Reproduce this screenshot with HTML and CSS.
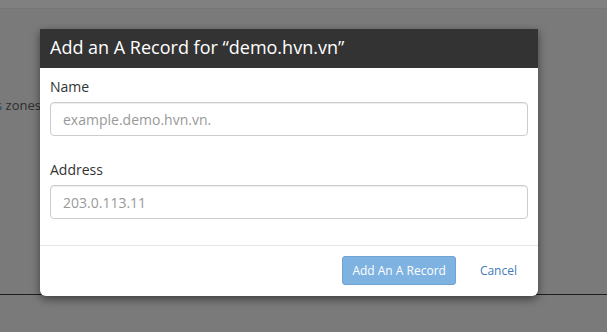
FILE: index.html
```html
<!DOCTYPE html>
<html lang="en">

<head>
    <meta charset="UTF-8">
    <meta name="viewport" content="width=device-width, initial-scale=1.0">
    <link rel="stylesheet" href="styles.css">
</head>

<body>
    <div class="page">
        <div class="topbar"></div>
        <p class="zones"><span class="link">s</span> zones</p>
        <div class="rule"></div>
    </div>

    <div class="overlay">
        <div class="modal">
            <header class="modal-header">Add an A Record for &ldquo;demo.hvn.vn&rdquo;</header>
            <div class="modal-body">
                <label class="field-label" for="name">Name</label>
                <input class="field-input" id="name" type="text" placeholder="example.demo.hvn.vn." />
                <label class="field-label second" for="address">Address</label>
                <input class="field-input" id="address" type="text" placeholder="203.0.113.11" />
            </div>
            <div class="modal-footer">
                <button class="add-btn" disabled>Add An A Record</button>
                <a class="cancel" href="#">Cancel</a>
            </div>
        </div>
    </div>
</body>

</html>
```

FILE: styles.css
```css
body {
    margin: 0;
    font-family: "Open Sans", "Liberation Sans", sans-serif;
    background-color: #7a7a7a;
    width: 607px;
    height: 332px;
    overflow: hidden;
}

.page {
    height: 332px;
}

.topbar {
    height: 8px;
    background-color: #808080;
    border-bottom: 1px solid #767676;
}

.zones {
    margin: 0;
    padding-top: 87px;
    margin-left: -4px;
    font-size: 13px;
    color: #2e2e2e;
}

.zones .link {
    color: #2a4a66;
}

.rule {
    margin-top: 180px;
    height: 1px;
    background-color: #1e1e1e;
}

.overlay {
    position: absolute;
    top: 0;
    left: 0;
    width: 607px;
    height: 332px;
}

.modal {
    margin-top: 29px;
    margin-left: 40px;
    width: 498px;
    background-color: #fff;
    border-radius: 0 0 6px 6px;
    box-shadow: 0 3px 9px rgba(0, 0, 0, 0.5);
}

.modal-header {
    height: 39px;
    box-sizing: border-box;
    padding: 6px 10px 0;
    background-color: #333;
    color: #fff;
    font-size: 18px;
}

.modal-body {
    display: flex;
    flex-direction: column;
    padding: 10px 10px 26px;
}

.field-label {
    font-size: 14px;
    color: #333;
    line-height: 18px;
    margin-bottom: 6px;
}

.field-label.second {
    margin-top: 25px;
}

.field-input {
    height: 34px;
    box-sizing: border-box;
    padding: 6px 12px;
    border: 1px solid #ccc;
    border-radius: 4px;
    font-family: inherit;
    font-size: 14px;
    color: #555;
    box-shadow: inset 0 1px 1px rgba(0, 0, 0, 0.075);
}

.field-input::placeholder {
    color: #999;
}

.modal-footer {
    display: flex;
    justify-content: flex-end;
    align-items: center;
    gap: 24px;
    padding: 10px 21px 11px 10px;
    border-top: 1px solid #e5e5e5;
}

.add-btn {
    height: 29px;
    padding: 0 9px;
    border: 1px solid #6fa3d3;
    border-radius: 3px;
    background-color: #7eb2e0;
    color: #fff;
    font-family: inherit;
    font-size: 12px;
}

.cancel {
    font-size: 12px;
    color: #3d7ab8;
    text-decoration: none;
}
```
